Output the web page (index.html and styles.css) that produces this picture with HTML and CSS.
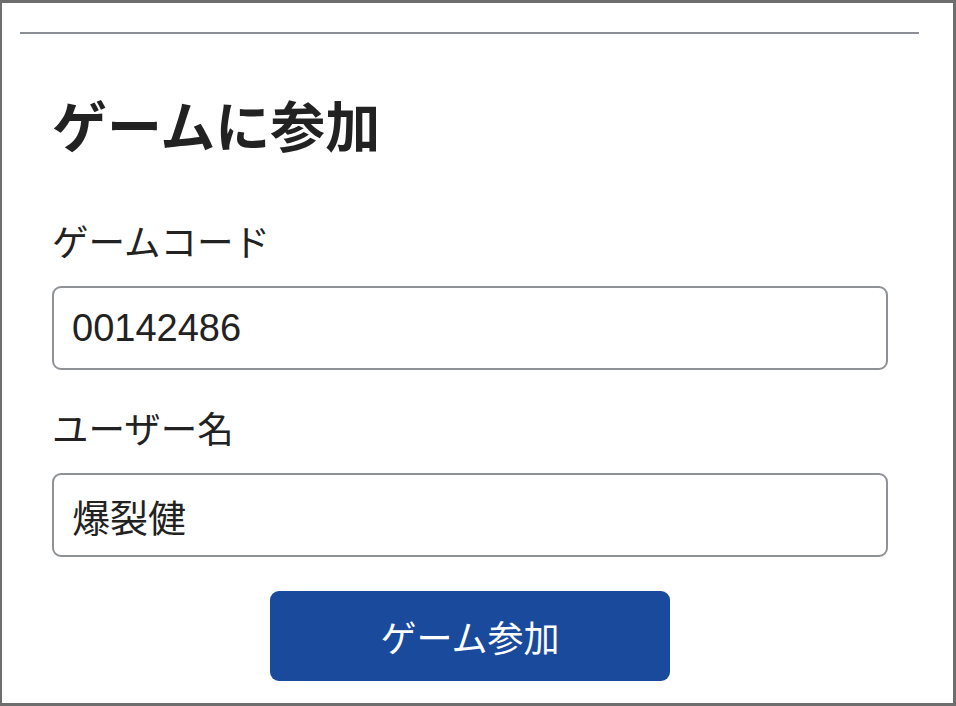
FILE: index.html
```html
<!doctype html>
<html>
    <head>
        <title>ゲームに参加</title>
        <meta charset="utf-8">
        <link rel="stylesheet" href="styles.css">
    </head>

    <body>
        <section id="frame">
            <div class="rule"></div>

            <form class="join">
                <h1 class="title">ゲームに参加</h1>

                <label class="label" for="code">ゲームコード</label>
                <input class="field" type="text" id="code" value="00142486" />

                <label class="label" for="name">ユーザー名</label>
                <input class="field" type="text" id="name" value="爆裂健" />

                <div class="actions">
                    <button class="submit" type="button">ゲーム参加</button>
                </div>
            </form>
        </section>
    </body>
</html>
```

FILE: styles.css
```css
 html, body{
     margin: 0px;
     padding: 0px;
     height: 100%;
 }

 body{
     font-family: "Liberation Sans", "Noto Sans CJK JP", sans-serif;
     color: #222222;
     background: #ffffff;
 }

 #frame{
     box-sizing: border-box;
     height: 100vh;
     border-style: solid;
     border-color: #6e6e6e;
     border-width: 3px 3px 3px 2px;
     padding: 0px 34px 0px 18px;
     overflow: hidden;
 }

 .rule{
     margin-top: 29px;
     height: 2px;
     background-color: #8b8e94;
 }

 .join{
     display: flex;
     flex-direction: column;
     padding: 0px 31px 0px 32px;
 }

 .title{
     margin: 60px 0px 0px 0px;
     font-size: 55px;
     font-weight: 700;
     line-height: 68px;
 }

 .label{
     margin-top: 59px;
     font-size: 36.5px;
     line-height: 46px;
 }

 .field + .label{
     margin-top: 38px;
 }

 .field{
     box-sizing: border-box;
     margin-top: 19px;
     height: 84px;
     padding: 0px 18px;
     border: 2px solid #8e9196;
     border-radius: 9px;
     font-family: inherit;
     font-size: 38px;
     color: #222222;
     background: #ffffff;
     outline: none;
 }

 .actions{
     display: flex;
     justify-content: center;
     margin-top: 34px;
 }

 .submit{
     width: 400px;
     height: 90px;
     border: none;
     border-radius: 9px;
     background-color: #1a4a9c;
     color: #ffffff;
     font-family: inherit;
     font-size: 36px;
     cursor: pointer;
 }
```
